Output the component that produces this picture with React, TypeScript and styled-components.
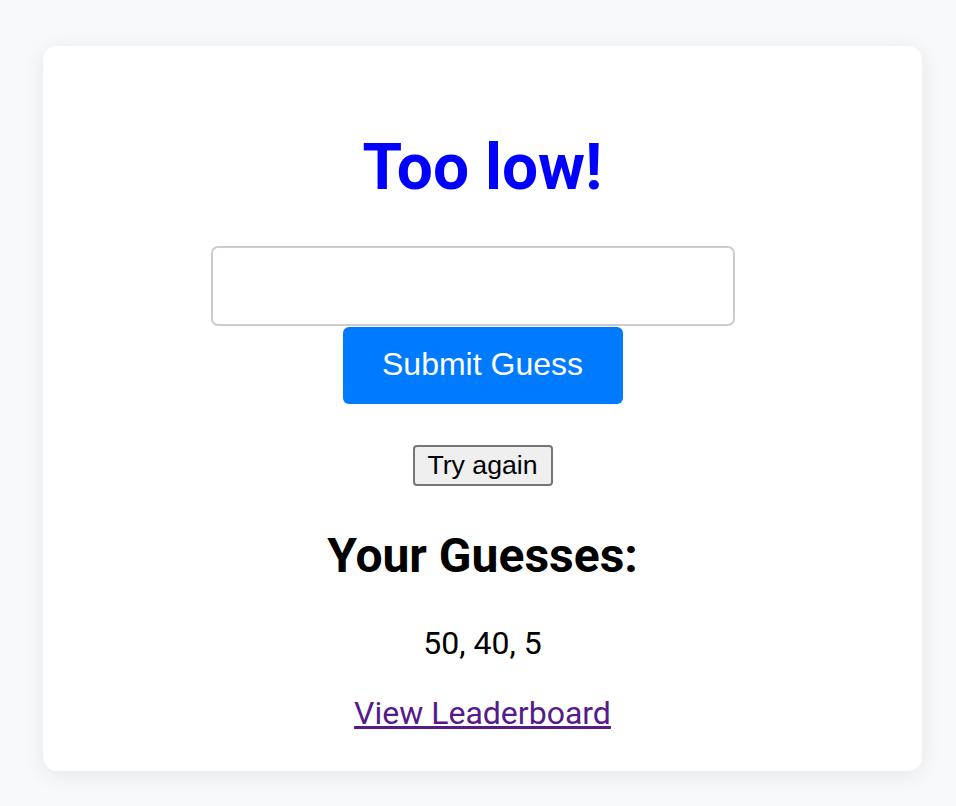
import React from "react";
import styled, { createGlobalStyle } from "styled-components";

const Global = createGlobalStyle`
  html, body { margin: 0; padding: 0; }
  body {
    background: #f8f9fa;
    font-family: Roboto, "Liberation Sans", Arial, sans-serif;
    color: #000;
  }
`;

const Page = styled.div`
  padding: 46px 34px 35px 43px;
`;

const Card = styled.div`
  width: 879px;
  box-sizing: border-box;
  background: #fff;
  border-radius: 14px;
  box-shadow: 0 4px 22px rgba(0, 0, 0, 0.08);
  padding: 0 0 38px;
  display: flex;
  flex-direction: column;
  align-items: center;
  text-align: center;
`;

const Title = styled.h1`
  margin: 84px 0 0;
  font-size: 64px;
  line-height: 75px;
  font-weight: 700;
  color: #0000ff;
`;

const GuessInput = styled.input`
  margin: 41px 19px 0 0;
  width: 524px;
  height: 80px;
  box-sizing: border-box;
  border: 2px solid #cccccc;
  border-radius: 7px;
  font-family: "Liberation Sans", Arial, sans-serif;
  font-size: 30px;
  padding: 0 16px;
  outline: none;
`;

const SubmitButton = styled.button`
  width: 280px;
  height: 77px;
  margin: 1px 0 0;
  border: none;
  border-radius: 6px;
  background: #007bff;
  color: #fff;
  font-family: "Liberation Sans", Arial, sans-serif;
  font-size: 32px;
  padding: 0 0 2px;
  cursor: pointer;
`;

const RetryButton = styled.button`
  margin-top: 41px;
  width: 140px;
  height: 41px;
  box-sizing: border-box;
  background: #efefef;
  border: 2px solid #767676;
  border-radius: 4px;
  font-family: "Liberation Sans", Arial, sans-serif;
  font-size: 26.67px;
  color: #000;
  padding: 0;
`;

const SubTitle = styled.h2`
  margin: 42px 0 0;
  font-size: 48px;
  line-height: 56px;
  font-weight: 700;
`;

const GuessList = styled.p`
  margin: 41px 0 0;
  font-size: 32px;
  line-height: 37.5px;
`;

const LeaderLink = styled.a`
  margin-top: 32.5px;
  font-size: 32px;
  line-height: 37.5px;
  color: #551a8b;
  text-decoration: underline;
`;

export default function App() {
  return (
    <>
      <Global />
      <Page>
        <Card>
          <Title>Too low!</Title>
          <GuessInput type="number" />
          <SubmitButton>Submit Guess</SubmitButton>
          <RetryButton>Try again</RetryButton>
          <SubTitle>Your Guesses:</SubTitle>
          <GuessList>50, 40, 5</GuessList>
          <LeaderLink href="#leaderboard">View Leaderboard</LeaderLink>
        </Card>
      </Page>
    </>
  );
}
